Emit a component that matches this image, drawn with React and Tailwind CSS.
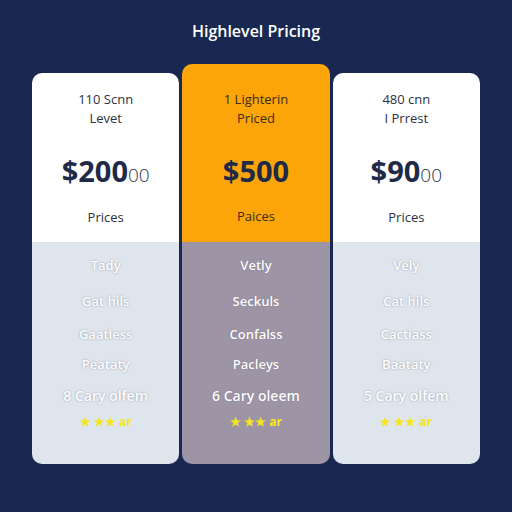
import React from 'react';

const plans = [
    {
        id: 'left',
        label: '110 Scnn',
        sub: 'Levet',
        price: '$200',
        cents: '00',
        foot: 'Prices',
        rows: ['Tady', 'Gat hils', 'Gaatless', 'Peataty', '8 Cary olfem'],
        featured: false,
    },
    {
        id: 'mid',
        label: '1 Lighterin',
        sub: 'Priced',
        price: '$500',
        cents: '',
        foot: 'Paices',
        rows: ['Vetly', 'Seckuls', 'Confalss', 'Pacleys', '6 Cary oleem'],
        featured: true,
    },
    {
        id: 'right',
        label: '480 cnn',
        sub: 'I Prrest',
        price: '$90',
        cents: '00',
        foot: 'Prices',
        rows: ['Vely', 'Cat hils', 'Cactiass', 'Baataty', '5 Cary olfem'],
        featured: false,
    },
];

// spacing between feature rows is uneven in the design
const rowGaps = ['mt-0', 'mt-[16px]', 'mt-[13px]', 'mt-[10px]', 'mt-[12px]'];

function PlanCard({ plan }) {
    const top = plan.featured
        ? 'bg-[#fba50b] h-[178px] pt-[35px] text-[#3b2c12]'
        : 'bg-white h-[169px] pt-[26px] text-[#2b3142]';
    const bottom = plan.featured
        ? 'bg-[#9d94a6] text-white [text-shadow:0_0_1px_rgba(70,60,80,0.5)]'
        : 'bg-[#dfe5ec] text-white [text-shadow:0_0_2px_rgba(110,120,140,0.75)]';

    return (
        <div className="flex-1 flex flex-col rounded-[10px] overflow-hidden">
            <div className={`flex flex-col items-center ${top}`}>
                <p className="text-[13px] leading-[18px] -mt-[9px]">{plan.label}</p>
                <p className="text-[13px] leading-[20px]">{plan.sub}</p>
                <p className="mt-[26px] flex items-baseline leading-[34px] text-[#1f2a48]">
                    <span className="text-[29px] font-bold">{plan.price}</span>
                    {plan.cents && <span className="text-[19px] font-light text-[#2a3246]">{plan.cents}</span>}
                </p>
                <p className={`${plan.featured ? 'mt-[18px]' : 'mt-[15px]'} text-[13px] leading-[20px]`}>{plan.foot}</p>
            </div>
            <div className={`flex-1 flex flex-col items-center pt-[13px] ${bottom}`}>
                {plan.rows.map((row, i) => (
                    <p
                        key={row}
                        className={`${rowGaps[i]} leading-[20px] font-semibold ${i === 4 ? 'text-[14px]' : 'text-[13px]'}`}
                    >
                        {row}
                    </p>
                ))}
                <p className="mt-[8px] text-[12px] leading-[16px] font-bold text-[#f5e61a] [text-shadow:none]">
                    ★ ★★ ar
                </p>
            </div>
        </div>
    );
}

function App() {
    return (
        <div
            className="w-[512px] h-[512px] bg-[#182850] flex flex-col items-center"
            style={{ fontFamily: '"Open Sans", "Noto Sans", sans-serif' }}
        >
            <h1 className="mt-[20px] text-[16px] leading-[22px] font-semibold text-white">Highlevel Pricing</h1>
            <div className="mt-[22px] w-[448px] h-[400px] flex items-end gap-[3px]">
                {plans.map((plan) => (
                    <div key={plan.id} className={plan.featured ? 'flex-1 h-[400px] flex' : 'flex-1 h-[391px] flex'}>
                        <PlanCard plan={plan} />
                    </div>
                ))}
            </div>
        </div>
    );
}

export default App;
